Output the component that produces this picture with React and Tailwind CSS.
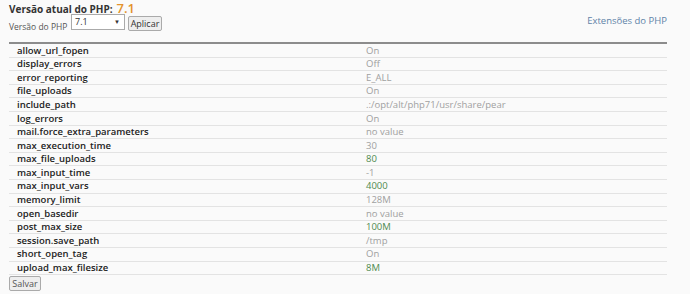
const rows = [
  ["allow_url_fopen", "On"],
  ["display_errors", "Off"],
  ["error_reporting", "E_ALL"],
  ["file_uploads", "On"],
  ["include_path", ".:/opt/alt/php71/usr/share/pear"],
  ["log_errors", "On"],
  ["mail.force_extra_parameters", "no value"],
  ["max_execution_time", "30"],
  ["max_file_uploads", "80", true],
  ["max_input_time", "-1"],
  ["max_input_vars", "4000", true],
  ["memory_limit", "128M"],
  ["open_basedir", "no value"],
  ["post_max_size", "100M", true],
  ["session.save_path", "/tmp"],
  ["short_open_tag", "On"],
  ["upload_max_filesize", "8M", true],
];

export default function App() {
  return (
    <div className="h-[294px] w-[690px] overflow-hidden bg-[#fafafa] pl-[9px] pr-[23px] pt-[2px] font-['Open_Sans',sans-serif] text-[#333]">
      <div className="flex h-[40px] justify-between">
        <div>
          <div className="flex h-[13px] items-end gap-[4px]">
            <span className="text-[10px] font-bold leading-[12px]">Versão atual do PHP:</span>
            <span className="text-[13px] font-semibold leading-[13px] text-[#e3922c]">7.1</span>
          </div>
          <div className="-mt-[1px] flex items-start">
            <span className="mt-[7px] w-[62px] whitespace-nowrap text-[8.5px] text-[#555]">Versão do PHP</span>
            <div className="flex h-[16px] w-[54px] items-center justify-between border border-[#aaa] bg-white pl-[3px] pr-[4px] text-[9px]">
              <span>7.1</span>
              <span className="text-[6px]">▼</span>
            </div>
            <button className="ml-[3px] mt-[2px] h-[15px] w-[34px] rounded-[2px] border border-[#aaa] bg-[#eee] text-[9px] leading-none text-[#333]">
              Aplicar
            </button>
          </div>
        </div>
        <a className="mt-[12px] text-[9.5px] text-[#5f83a8]">Extensões do PHP</a>
      </div>
      <div className="border-t-2 border-[#8c8c8c]">
        {rows.map(([k, v, green]) => (
          <div key={k} className="flex h-[13.6px] items-center border-b border-[#e3e3e3] text-[9.5px] leading-none">
            <div className="w-[357px] pl-[8px] font-semibold text-[#222]">{k}</div>
            <div className={green ? "text-[#4f8a4f]" : "text-[#a0a0a0]"}>{v}</div>
          </div>
        ))}
      </div>
      <button className="mt-[1px] block h-[15px] w-[32px] rounded-[2px] border border-[#aaa] bg-[#eee] text-[9px] leading-none text-[#555]">
        Salvar
      </button>
    </div>
  );
}
